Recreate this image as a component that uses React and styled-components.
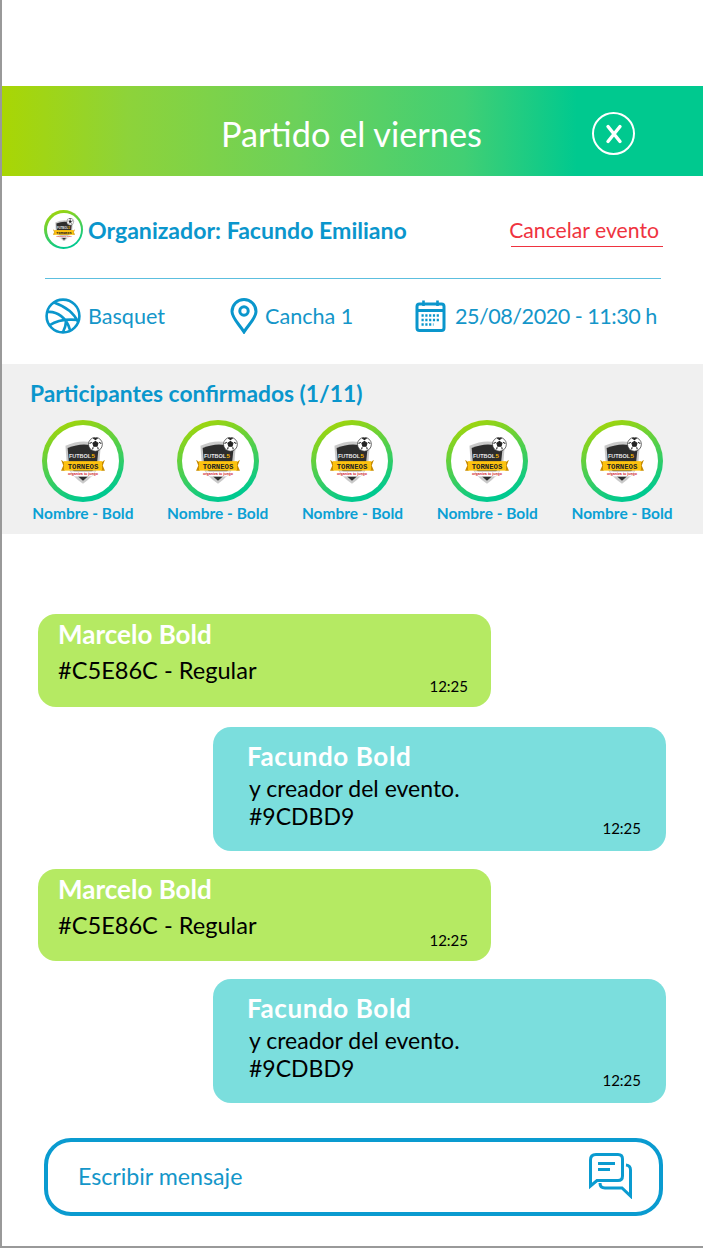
import React from "react";
import styled, { createGlobalStyle } from "styled-components";

const Global = createGlobalStyle`
  html, body { margin: 0; padding: 0; background: #fff; }
  body { font-family: "Lato", "Noto Sans", sans-serif; }
`;
const Page = styled.div`
  width: 703px; height: 1248px; box-sizing: border-box; overflow: hidden;
  border-left: 2px solid #999; border-bottom: 2px solid #999;
  padding-top: 86px; display: flex; flex-direction: column; background: #fff;
`;
const Header = styled.header`
  height: 90px; flex: none; display: grid; grid-template-columns: 1fr auto 1fr; align-items: center;
  background: linear-gradient(90deg, #a9d604 0%, #8dd33a 18%, #6cd15a 42%, #41cf74 66%, #00c98f 82%, #00c98f 100%);
`;
const Title = styled.h1`
  grid-column: 2; margin: 5px 0 0 -2px; font-size: 34.3px; font-weight: 400; color: #fff; line-height: 40px;
`;
const CloseBtn = styled.div`
  justify-self: end; margin: 5px 68px 0 0; width: 43px; height: 43px; border: 2px solid #fff; border-radius: 50%;
  box-sizing: border-box; display: flex; align-items: center; justify-content: center;
`;
const Info = styled.section`
  padding: 34px 42px 0 43px; height: 188px; box-sizing: border-box; flex: none;
`;
const OrgRow = styled.div`
  display: flex; justify-content: space-between; align-items: flex-start; height: 68px;
  border-bottom: 1px solid #5cbfdf;
`;
const Org = styled.div`
  display: flex; align-items: center; gap: 5px; font-size: 23.1px; font-weight: 700; color: #0a96cc; margin-left: -1px;
`;
const Cancel = styled.span`
  position: relative; font-size: 21.2px; color: #ef3340; line-height: 31px; margin: 5px -2px 0 0; padding-right: 4px;
  &::after { content: ""; position: absolute; left: 2px; right: 0; bottom: -1px; height: 1px; background: #ef3340; }
`;
const Meta = styled.div`
  display: flex; align-items: center; height: 77px; color: #1496c9; font-size: 21.6px; margin-top: -2px;
`;
const MetaItem = styled.div`
  display: flex; align-items: center; gap: ${p => p.$gap}px; width: ${p => p.$w}px; flex: none; white-space: nowrap;
  letter-spacing: ${p => p.$ls || 0}px;
`;
const Participants = styled.section`
  height: 170px; background: #f0f0f0; flex: none; padding: 15px 28px 0; box-sizing: border-box;
`;
const PTitle = styled.h2`
  margin: 0 0 13px; font-size: 22.8px; font-weight: 700; color: #0a96cc; line-height: 28px; white-space: nowrap;
`;
const PRow = styled.div`
  display: flex; gap: 29px;
`;
const Person = styled.div`
  width: 106px; display: flex; flex-direction: column; align-items: center;
  font-size: 15.5px; font-weight: 700; color: #0aa0d4; line-height: 18px; gap: 2px; white-space: nowrap;
`;
const Ring = styled.div`
  width: ${p => p.$s}px; height: ${p => p.$s}px; border-radius: 50%; flex: none;
  background: linear-gradient(160deg, #a9d604 5%, #00c98f 85%);
  display: flex; align-items: center; justify-content: center;
`;
const RingInner = styled.div`
  width: ${p => p.$s}px; height: ${p => p.$s}px; border-radius: 50%; background: #fff;
  display: flex; align-items: center; justify-content: center;
`;
const Chat = styled.section`
  flex: 1; display: flex; flex-direction: column; padding: 80px 37px 0 36px;
`;
const Bubble = styled.div`
  box-sizing: border-box; position: relative; width: 453px; border-radius: 18px; color: #000; flex: none;
  align-self: ${p => p.$mine ? "flex-end" : "flex-start"};
  background: ${p => p.$mine ? "#7bdedd" : "#b5ea63"};
  height: ${p => p.$h}px;
  margin-bottom: ${p => p.$mb}px;
  padding: ${p => p.$mine ? "14px 0 0 34px" : "5px 0 0 20px"};
`;
const Author = styled.div`
  color: #fff; font-size: 26px; font-weight: 700; line-height: 30px;
  letter-spacing: ${p => p.$mine ? .6 : 0}px;
`;
const Body = styled.div`
  font-size: ${p => p.$mine ? 23 : 23.6}px; line-height: 28px;
  margin-top: ${p => p.$mine ? 3 : 7}px; margin-left: ${p => p.$mine ? 2 : 0}px;
`;
const Time = styled.span`
  position: absolute; right: ${p => p.$mine ? 25 : 23}px; bottom: ${p => p.$mine ? 14 : 12}px; font-size: 15px; line-height: 18px;
`;
const InputBar = styled.div`
  box-sizing: border-box; height: 78px; margin: 35px 3px 0 6px; border: 4px solid #0a9bd0; border-radius: 27px; flex: none;
  display: flex; align-items: center; justify-content: space-between; padding: 0 26px 2px 30px;
  color: #1496c9; font-size: 23.2px;
`;

const Logo = ({ s = 46 }) => (
  <svg width={s} height={s * 1.08} viewBox="0 0 60 65" aria-hidden="true">
    <path d="M6 12 Q24 4 40 7 L54 15 L52 40 Q43 55 30 64 Q16 55 8 40 Z" fill="#c9c9c9" />
    <path d="M9 15 Q26 8 40 11 L51 18 L49 38 Q41 51 30 60 Q19 51 11 38 Z" fill="#2d2d2d" />
    <text x="26" y="29" textAnchor="middle" fontFamily="Liberation Sans, sans-serif" fontSize="7.5" fill="#e8e8e8">FUTBOL</text>
    <text x="44" y="29" textAnchor="middle" fontFamily="Liberation Sans, sans-serif" fontSize="8.5" fontWeight="700" fill="#f5b400">5</text>
    <path d="M0 31 L5 35 V46 H0 L3 39 Z M60 31 L55 35 V46 H60 L57 39 Z" fill="#c98d00" />
    <rect x="4" y="33" width="52" height="13" fill="#fdc20f" />
    <text x="30" y="43.5" textAnchor="middle" fontFamily="Liberation Mono, monospace" fontWeight="700" fontSize="10" fill="#222">TORNEOS</text>
    <path d="M13 47 H47 L42 54 H18 Z" fill="#fff" stroke="#d9d9d9" strokeWidth=".6" />
    <text x="30" y="52.5" textAnchor="middle" fontFamily="Liberation Sans, sans-serif" fontSize="5" fill="#d2232a">organiza tu juego</text>
    <circle cx="47" cy="10" r="9.5" fill="#fff" stroke="#333" />
    <path d="M47 6 l3.5 2.6 -1.3 4 h-4.4 l-1.3 -4 Z M39 9 l3 -2 M55 9 l-3 -2 M43 17 l1 -3 M51 17 l-1 -3 M44 1.5 l3 2 3 -2" fill="#222" stroke="#222" strokeWidth="1.4" />
  </svg>
);

const Chats = () => (
  <svg width="44" height="46" viewBox="0 0 44 46" fill="none" stroke="#0a9bd0" strokeWidth="3" aria-hidden="true">
    <path d="M7 1.5 H29 Q33.5 1.5 33.5 6 V23 Q33.5 27.5 29 27.5 H8 L1.5 33 V7 Q1.5 1.5 7 1.5 Z" />
    <path d="M37 12 Q41.5 12.5 41.5 17 V43 L33 35 H16 Q11 35 11 30" />
    <path d="M9 10.5 H26 M9 16.5 H21" />
  </svg>
);

const Ball = () => (
  <svg width="36" height="36" viewBox="0 0 36 36" fill="none" stroke="#0a96cc" strokeWidth="2.6" aria-hidden="true">
    <circle cx="18" cy="18" r="16.4" />
    <path d="M9 4.5 C19 8 29 15 33 24 M2.5 14 C12 13 22 20 25 32 M5 27 C12 22 24 21 34 22 M21 23 C21 27 20 30 18 34" />
  </svg>
);
const Pin = () => (
  <svg width="28" height="36" viewBox="0 0 28 36" fill="none" stroke="#0a96cc" strokeWidth="3" aria-hidden="true">
    <path d="M14 34 C9 26 2 20 2 13.5 A12 12 0 0 1 26 13.5 C26 20 19 26 14 34 Z" />
    <circle cx="14" cy="13" r="4.2" />
  </svg>
);
const Calendar = () => (
  <svg width="31" height="32" viewBox="0 0 30 32" fill="none" aria-hidden="true">
    <rect x="1.5" y="4" width="27" height="26.5" rx="2.5" stroke="#0a96cc" strokeWidth="3" />
    <path d="M1.5 10.5 H28.5" stroke="#0a96cc" strokeWidth="3" />
    <path d="M8 0.5 V6 M22 0.5 V6" stroke="#0a96cc" strokeWidth="2.6" />
    <path d="M6 15.5 H24 M6 20 H24 M6 24.5 H18" stroke="#0a96cc" strokeWidth="2.4" strokeDasharray="2.2 1.6" />
  </svg>
);

const people = [0, 1, 2, 3, 4];
const msgs = [
  { h: 93, mb: 20 }, { mine: true, h: 124, mb: 18 }, { h: 92, mb: 18 }, { mine: true, h: 124, mb: 0 },
];

export default function App() {
  return (
    <Page>
      <Global />
      <Header>
        <Title>Partido el viernes</Title>
        <CloseBtn>
          <svg width="18" height="20" viewBox="0 0 18 20" aria-hidden="true">
            <path d="M3 2.5 L15 17.5 M15 2.5 L3 17.5" stroke="#fff" strokeWidth="3.4" strokeLinecap="round" />
          </svg>
        </CloseBtn>
      </Header>
      <Info>
        <OrgRow>
          <Org>
            <Ring $s={39}><RingInner $s={34}><Logo s={22} /></RingInner></Ring>
            Organizador: Facundo Emiliano
          </Org>
          <Cancel>Cancelar evento</Cancel>
        </OrgRow>
        <Meta>
          <MetaItem $w={185} $gap={7}><Ball />Basquet</MetaItem>
          <MetaItem $w={185} $gap={7}><Pin />Cancha 1</MetaItem>
          <MetaItem $w={250} $gap={9} $ls={-0.5}><Calendar />25/08/2020 - 11:30 h</MetaItem>
        </Meta>
      </Info>
      <Participants>
        <PTitle>Participantes confirmados (1/11)</PTitle>
        <PRow>
          {people.map(i => (
            <Person key={i}>
              <Ring $s={82}><RingInner $s={72}><Logo s={44} /></RingInner></Ring>
              Nombre - Bold
            </Person>
          ))}
        </PRow>
      </Participants>
      <Chat>
        {msgs.map((m, i) => (
          <Bubble key={i} $mine={m.mine} $mb={m.mb} $h={m.h}>
            <Author $mine={m.mine}>{m.mine ? "Facundo Bold" : "Marcelo Bold"}</Author>
            {m.mine
              ? <Body $mine>y creador del evento.<br />#9CDBD9</Body>
              : <Body>#C5E86C - Regular</Body>}
            <Time $mine={m.mine}>12:25</Time>
          </Bubble>
        ))}
        <InputBar>
          Escribir mensaje
          <Chats />
        </InputBar>
      </Chat>
    </Page>
  );
}
